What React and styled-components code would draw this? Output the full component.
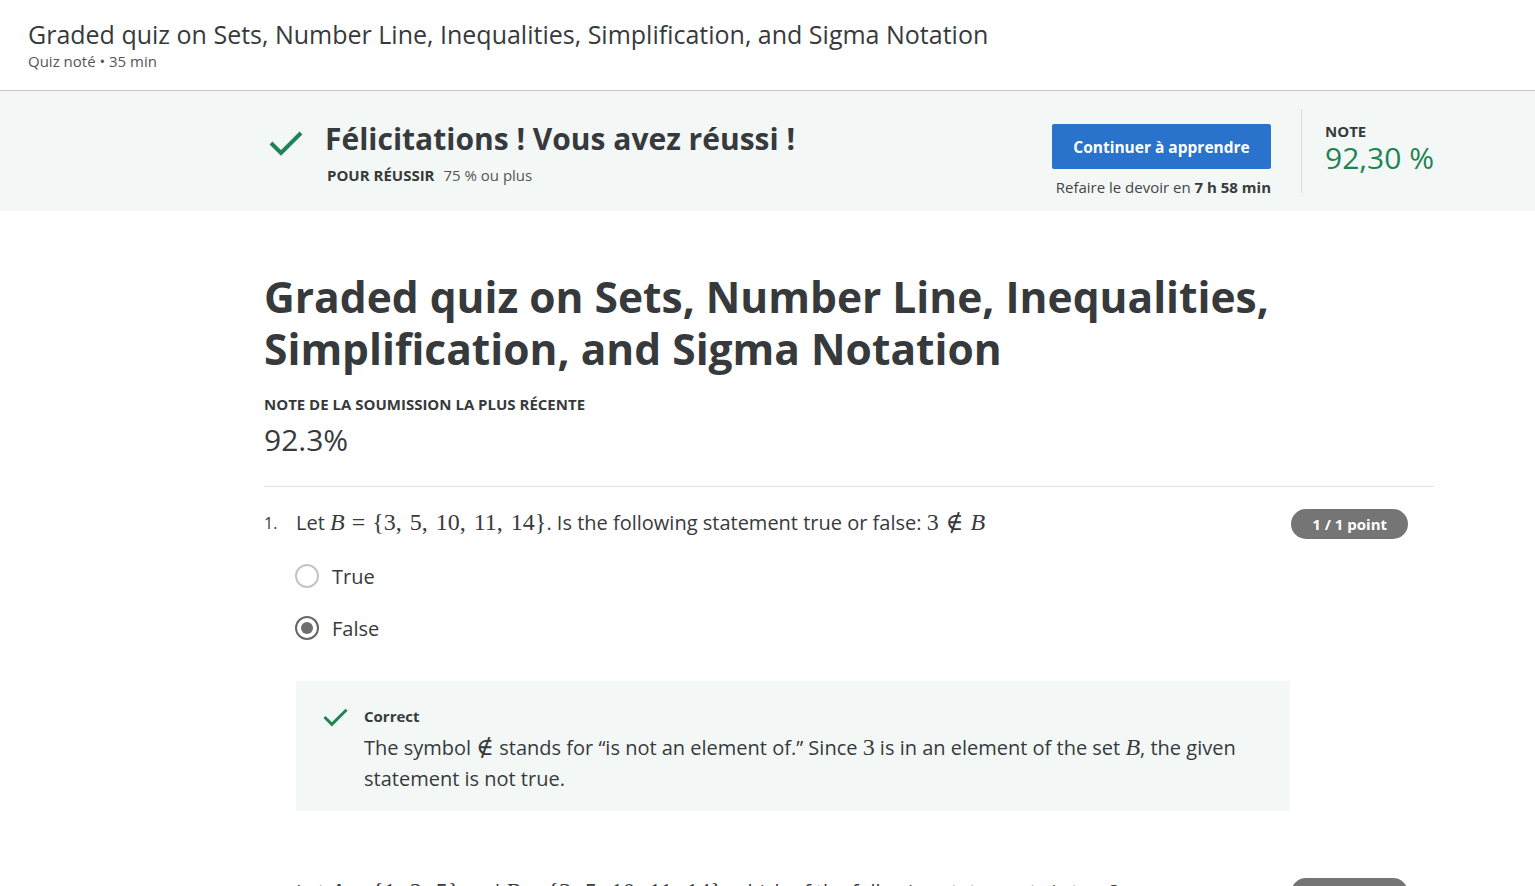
import React from 'react';
import styled, { createGlobalStyle } from 'styled-components';

const GlobalStyle = createGlobalStyle`
  body {
    margin: 0;
    font-family: "Open Sans", "Noto Sans", Arial, sans-serif;
    color: #373a3c;
    background: #fff;
  }
`

const Page = styled.div`
  width: 1535px;
  height: 886px;
  overflow: hidden;
`

const TopHeader = styled.header`
  height: 91px;
  box-sizing: border-box;
  padding: 17px 28px 0;
  border-bottom: 1px solid #c6c6c6;

  .title {
    font-size: 25px;
    line-height: 34px;
    color: #373a3c;
  }
  .meta {
    font-size: 15px;
    line-height: 20px;
    color: #555;
  }
`

const Banner = styled.section`
  background: #f3f8f6;
  height: 120px;
  display: flex;
  align-items: flex-start;
`

const BannerInner = styled.div`
  margin-left: 264px;
  width: 1170px;
  display: flex;
  align-items: flex-start;
`

const Passed = styled.div`
  display: flex;
  gap: 21px;
  padding-top: 28px;
  flex: 1;

  svg {
    margin-top: 9px;
    margin-left: 4px;
  }
  h2 {
    margin: 0;
    font-size: 30px;
    line-height: 40px;
    font-weight: 700;
  }
  .req {
    margin-top: 6px;
    margin-left: 2px;
    font-size: 15px;
    line-height: 20px;
    color: #555;
    b {
      color: #373a3c;
      margin-right: 5px;
    }
  }
`

const Actions = styled.div`
  display: flex;
  flex-direction: column;
  align-items: flex-end;
  padding-top: 33px;
  font-size: 15px;
  line-height: 20px;
  color: #444;

  b { color: #373a3c; }
`

const PrimaryButton = styled.button`
  background: #2a73cc;
  color: #fff;
  border: none;
  border-radius: 2px;
  width: 219px;
  height: 45px;
  font-family: inherit;
  font-size: 15.5px;
  font-weight: 700;
  margin-bottom: 8px;
`

const Divider = styled.div`
  width: 1px;
  height: 84px;
  background: #dcdcdc;
  margin: 18px 23px 0 30px;
`

const Grade = styled.div`
  padding-top: 30px;

  .label {
    font-size: 15px;
    line-height: 20px;
    font-weight: 700;
  }
  .value {
    font-size: 30px;
    line-height: 34px;
    color: #1f8354;
  }
`

const Main = styled.main`
  margin-left: 264px;
  width: 1170px;
  padding-top: 60px;
`

const Heading = styled.h1`
  margin: 0;
  font-size: 42.5px;
  line-height: 52px;
  font-weight: 700;
  color: #373a3c;
`

const ScoreLabel = styled.div`
  margin-top: 19px;
  font-size: 15px;
  line-height: 20px;
  font-weight: 700;
`

const ScoreValue = styled.div`
  margin-top: 8px;
  font-size: 30px;
  line-height: 36px;
  padding-bottom: 28px;
  border-bottom: 1px solid #e1e1e1;
`

const Question = styled.div`
  padding-top: 22px;
  padding-right: 26px;
`

const QuestionHead = styled.div`
  display: flex;
  align-items: flex-start;
  justify-content: space-between;
`

const Prompt = styled.div`
  display: flex;
  font-size: 20px;
  line-height: 28px;

  .num {
    width: 32px;
    font-size: 16px;
  }
`

const Math = styled.span`
  font-family: "Liberation Serif", "DejaVu Serif", serif;
  font-size: 24px;
  line-height: 1;
  i { font-style: italic; }
  .sep { margin-right: 2px; }
  .rel { margin: 0 7px; }
`

const Badge = styled.span`
  background: #757575;
  color: #fff;
  font-size: 15px;
  font-weight: 700;
  line-height: 30px;
  height: 30px;
  padding: 0 21px;
  border-radius: 15px;
  white-space: nowrap;
`

const Options = styled.div`
  margin: 19px 0 0 32px;
  display: flex;
  flex-direction: column;
  gap: 16px;
`

const Option = styled.label`
  display: flex;
  align-items: center;
  gap: 13px;
  height: 36px;
  font-size: 20px;
`

const Radio = styled.span`
  box-sizing: border-box;
  width: 24px;
  height: 24px;
  border-radius: 50%;
  border: ${p => (p.$checked ? '2.5px solid #666' : '2px solid #c4c4c4')};
  display: flex;
  align-items: center;
  justify-content: center;
  margin-left: -1px;

  &::after {
    content: '';
    display: ${p => (p.$checked ? 'block' : 'none')};
    width: 12px;
    height: 12px;
    border-radius: 50%;
    background: #6e6e6e;
  }
`

const Feedback = styled.div`
  margin: 35px 0 0 32px;
  width: 994px;
  box-sizing: border-box;
  background: #f3f8f6;
  padding: 25px 48px 17px 26px;
  display: flex;
  gap: 15px;

  svg { flex: none; }
  .title {
    font-size: 15px;
    line-height: 20px;
    font-weight: 700;
  }
  .text {
    margin-top: 6px;
    font-size: 20px;
    line-height: 31px;
  }
`

const NextQuestion = styled(Question)`
  padding-top: 67px;
`

const Check = ({ w, h }) => (
  <svg width={w} height={h} viewBox="0 0 36 30">
    <path d="M3 15 L13 25 L33 5" fill="none" stroke="#1f8354" strokeWidth="4" />
  </svg>
)

const SetOf = ({ items }) => (
  <>
    {'{'}
    {items.map((n, i) => (
      <span key={n} className={i < items.length - 1 ? 'sep' : undefined}>
        {n}{i < items.length - 1 ? ', ' : ''}
      </span>
    ))}
    {'}'}
  </>
)

const App = () => (
  <Page>
    <GlobalStyle />
    <TopHeader>
      <div className="title">Graded quiz on Sets, Number Line, Inequalities, Simplification, and Sigma Notation</div>
      <div className="meta">Quiz noté • 35 min</div>
    </TopHeader>

    <Banner>
      <BannerInner>
        <Passed>
          <Check w={36} h={30} />
          <div>
            <h2>Félicitations ! Vous avez réussi !</h2>
            <div className="req"><b>POUR RÉUSSIR</b> 75 % ou plus</div>
          </div>
        </Passed>
        <Actions>
          <PrimaryButton>Continuer à apprendre</PrimaryButton>
          <span>Refaire le devoir en <b>7 h 58 min</b></span>
        </Actions>
        <Divider />
        <Grade>
          <div className="label">NOTE</div>
          <div className="value">92,30 %</div>
        </Grade>
      </BannerInner>
    </Banner>

    <Main>
      <Heading>Graded quiz on Sets, Number Line, Inequalities, Simplification, and Sigma Notation</Heading>
      <ScoreLabel>NOTE DE LA SOUMISSION LA PLUS RÉCENTE</ScoreLabel>
      <ScoreValue>92.3%</ScoreValue>

      <Question>
        <QuestionHead>
          <Prompt>
            <span className="num">1.</span>
            <span>
              Let <Math><i>B</i><span className="rel">=</span><SetOf items={[3, 5, 10, 11, 14]} /></Math>. Is the following statement true or false: <Math>3<span className="rel">∉</span><i>B</i></Math>
            </span>
          </Prompt>
          <Badge>1 / 1 point</Badge>
        </QuestionHead>
        <Options>
          <Option><Radio />True</Option>
          <Option><Radio $checked />False</Option>
        </Options>
        <Feedback>
          <Check w={27} h={22} />
          <div>
            <div className="title">Correct</div>
            <div className="text">
              The symbol <Math>∉</Math> stands for “is not an element of.” Since <Math>3</Math> is in an element of the set <Math><i>B</i></Math>, the given statement is not true.
            </div>
          </div>
        </Feedback>
      </Question>

      <NextQuestion>
        <QuestionHead>
          <Prompt>
            <span className="num">2.</span>
            <span>
              Let <Math><i>A</i><span className="rel">=</span><SetOf items={[1, 2, 5]} /></Math> and <Math><i>B</i><span className="rel">=</span><SetOf items={[3, 5, 10, 11, 14]} /></Math>, which of the following statements is true?
            </span>
          </Prompt>
          <Badge>1 / 1 point</Badge>
        </QuestionHead>
      </NextQuestion>
    </Main>
  </Page>
)

export default App;
